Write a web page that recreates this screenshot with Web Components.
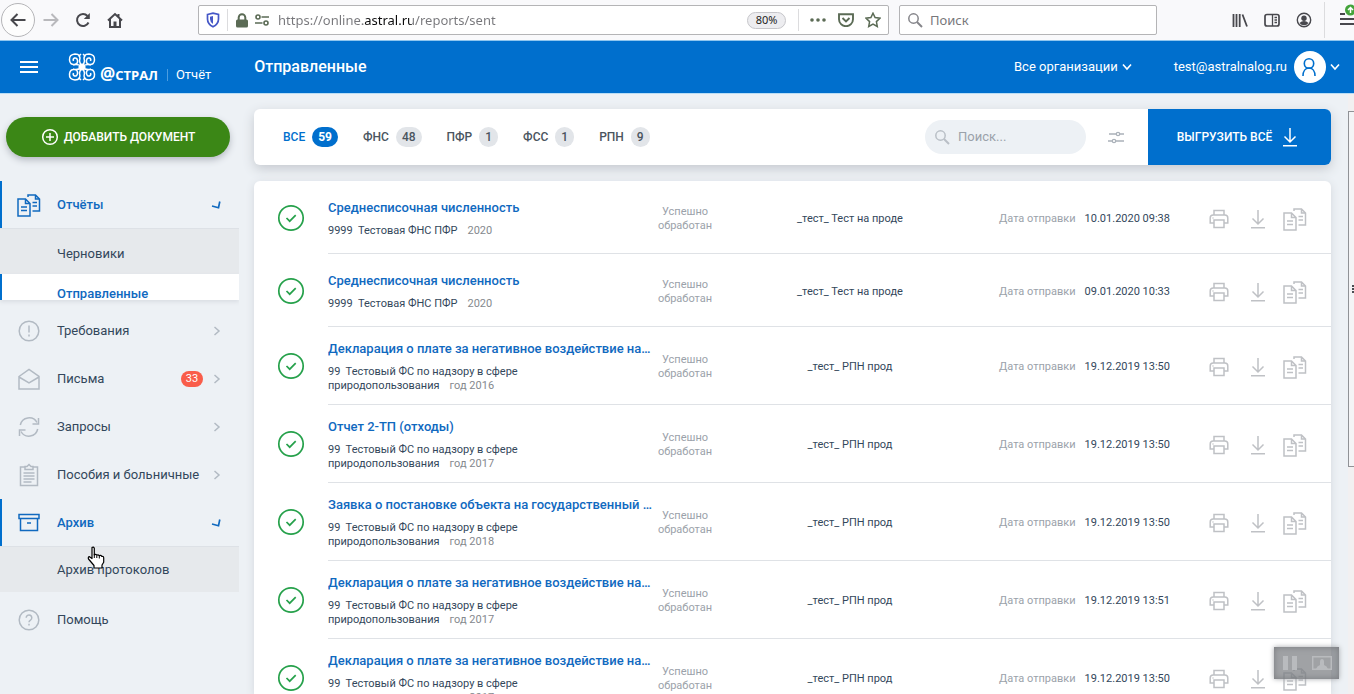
<!DOCTYPE html>
<html lang="ru">
<head>
<meta charset="utf-8">
<meta name="viewport" content="width=device-width, initial-scale=1">
<title>Отправленные</title>
<style>
  html, body { height: 100%; }
  body { margin: 0; overflow: hidden; background: #edf1f5; color: #33475b; font-family: Roboto, "Liberation Sans", sans-serif; font-size: 13px; line-height: 16px;
    --blue: #006fcd; --link: #1069bf; --muted: #9ba2aa; --icon: #b9bfc6; --ground: #edf1f5; --green: #26a14b; }
</style>
</head>
<body>
<astral-page></astral-page>

<script>
const svg = (w, h, body, extra = '') =>
  `<svg width="${w}" height="${h}" viewBox="0 0 ${w} ${h}" fill="none" stroke="currentColor" stroke-width="1.5" aria-hidden="true" ${extra}>${body}</svg>`;

const ICONS = {
  docs: svg(24, 24, '<path d="M1 6h7.500l4.500 4.500V23H1zM8.500 6v4.500H13M4 14h6M4 17.500h6"/><path d="M11 4V2h7.500l4 4v12H15.500M18.500 2v4h4M15.500 9.500h4.500M15.500 13h4.500"/>'),
  alert: svg(24, 24, '<circle cx="12" cy="12" r="9.800"/><path d="M12 6.500v7M12 15.500v2"/>'),
  mail: svg(24, 24, '<path d="M2 9.500L12 2.500l10 7V22H2zM2 10l10 6 10-6"/>'),
  sync: svg(24, 24, '<path d="M3.300 10A9 9 0 0 1 20 7.500M20.700 14A9 9 0 0 1 4 16.500"/><path d="M21.500 3v6h-6M2.500 21v-6h6"/>'),
  clip: svg(24, 24, '<path d="M8 4H3.500v18.500h17V4H16"/><path d="M8 6.500V3.500h2l2-2 2 2h2v3zM6.500 10h11M6.500 13h11M6.500 16h11M6.500 19h8"/>'),
  archive: svg(24, 24, '<path d="M2 3.500h20v4H2zM3.500 7.500v12h17v-12M10 12h4"/>'),
  help: svg(24, 24, '<circle cx="12" cy="12" r="9.800"/><path d="M9.200 9.800a2.800 2.800 0 1 1 4.300 2.300c-1.100.700-1.500 1.200-1.500 2.200M12 15.800v1.700"/>'),
  right: svg(8, 12, '<path d="M1.500 2l4.500 4-4.500 4"/>'),
  open: svg(10, 10, '<path d="M1 6l6.500 1.700L8.800 1.500" stroke-width="1.700"/>'),
  down: svg(10, 8, '<path d="M1 1.500l4 4.500 4-4.500" stroke-width="1.600"/>'),
  print: svg(20, 20, '<path d="M5 6V1.500h10V6M5 14H1.200V9q0-3 3-3h11.600q3 0 3 3v5H15M5 11h10v7.500H5zM3.500 9h1"/>'),
  load: svg(16, 20, '<path d="M8 1v14M2.500 9.500L8 15l5.500-5.500M1 18.700h14"/>'),
  filter: svg(16, 14, '<path d="M1 4h7M12 4h4M0 11h4M8 11h8" stroke-width="1.300"/><circle cx="10" cy="4" r="1.700" stroke-width="1.200"/><circle cx="6" cy="11" r="1.700" stroke-width="1.200"/>'),
  search: svg(16, 16, '<circle cx="6.500" cy="6.500" r="4.700"/><path d="M10 10l5 5" stroke-width="2"/>'),
  plus: svg(18, 18, '<circle cx="9" cy="9" r="7.300"/><path d="M9 5v8M5 9h8"/>'),
  check: svg(28, 28, '<circle cx="14" cy="14" r="12.200" stroke-width="1.700"/><path d="M9.500 14l3.200 3.200 6-6" stroke-width="1.700"/>'),
  user: svg(20, 22, '<circle cx="10" cy="7.500" r="4.700" stroke-width="1.600"/><path d="M4 20c0-5 2.500-8 6-8s6 3 6 8" stroke-width="1.600"/>'),
  burger: svg(18, 14, '<path d="M0 2h18M0 7h18M0 12h18" stroke-width="2"/>'),
  back: svg(16, 14, '<path d="M15.500 7H2M7.500 1L1.500 7l6 6" stroke-width="2"/>'),
  forward: svg(16, 14, '<path d="M.500 7H14M8.500 1l6 6-6 6" stroke-width="2"/>'),
  reload: svg(16, 16, '<path d="M13.500 10.500A6 6 0 1 1 12.500 4" stroke-width="2"/><path d="M14.800 1v6h-6z" fill="currentColor" stroke="none"/>'),
  home: svg(16, 16, '<path d="M1 8.500L8 2l7 6.500M3 7v8h10V7M11.500 5V2" stroke-width="2"/><path d="M6.500 9.500h3V15h-3z" fill="currentColor" stroke="none"/>'),
  shield: svg(14, 16, '<path d="M1.500 2.500L7 1.200l5.500 1.300v4.500q0 5-5.500 7.800Q1.500 12 1.500 7z" stroke-width="1.700"/><path d="M7 4v8Q4 10 4 7V4.700z" fill="currentColor" stroke="none"/>'),
  lock: svg(12, 15, '<rect y="6.500" width="12" height="8" rx="1.500" fill="currentColor" stroke="none"/><path d="M2.700 7V4.500a3.300 3.300 0 0 1 6.600 0V7" stroke-width="2"/>'),
  perms: svg(14, 12, '<path d="M6.500 3H14M0 9h7.500" stroke-width="1.700"/><circle cx="3" cy="3" r="2" stroke-width="1.600"/><circle cx="11" cy="9" r="2" stroke-width="1.600"/>'),
  dots: svg(18, 4, '<g fill="currentColor" stroke="none"><circle cx="3" cy="2" r="1.800"/><circle cx="9" cy="2" r="1.800"/><circle cx="15" cy="2" r="1.800"/></g>'),
  pocket: svg(16, 14, '<path d="M1 1.200h14v5a7 7 0 0 1-14 0zM4.500 5L8 8.500 11.500 5" stroke-width="1.900"/>'),
  star: svg(16, 16, '<path d="M8 1.200l2.100 4.400 4.800.600-3.500 3.400.900 4.900L8 12.200l-4.300 2.300.900-4.900L1.100 6.200l4.800-.600z" stroke-width="1.500"/>'),
  library: svg(16, 14, '<path d="M1.500 1v13M4.500 1v13M7.700 1v13M10.500 1.500l4.500 12" stroke-width="1.800"/>'),
  panel: svg(16, 14, '<rect x="1" y="1.500" width="14" height="11.500" rx="2" stroke-width="1.700"/><path d="M8.500 1v12M10.500 4.500H13M10.500 7H13M10.500 9.500H13" stroke-width="1.300"/>'),
  account: svg(16, 16, '<circle cx="8" cy="8" r="6.700" stroke-width="1.400"/><circle cx="8" cy="6.200" r="2.700" fill="currentColor" stroke="none"/><path d="M3.500 11q2-2 4.500-2t4.500 2q-1.500 2.300-4.500 2.300T3.500 11z" fill="currentColor" stroke="none"/>'),
  menu: svg(18, 24, '<path d="M3 10h5M3 15h14M3 20h14" stroke-width="1.900"/><circle cx="13.500" cy="6" r="5.500" fill="#43a33a" stroke="none"/><path d="M13.500 9V3.500M11 6l2.500-2.500L16 6" stroke="#fff"/>')
};

const define = (name, css, html) => {
  const template = document.createElement('template');
  template.innerHTML = `<style>
    *, *::before { box-sizing: border-box; }
    svg { display: block; flex: none; }
    button { font: inherit; color: inherit; background: none; border: 0; padding: 0; margin: 0; }
    a { color: inherit; text-decoration: none; }
    input { font: inherit; color: inherit; background: none; border: 0; padding: 0; min-width: 0; outline: 0; }
    ${css}</style>${typeof html === 'string' ? html : ''}`;
  customElements.define(name, class extends HTMLElement {
    constructor() {
      super();
      this.attachShadow({ mode: 'open' }).append(template.content.cloneNode(true));
    }
    connectedCallback() {
      if (typeof html === 'function' && !this.ready) {
        this.ready = true;
        this.shadowRoot.append(document.createRange().createContextualFragment(html(this.dataset)));
      }
    }
  });
};

define('browser-bar', `
  :host { display: flex; align-items: center; height: 41px; flex: none; background: #f9f9fb; border-bottom: 1px solid #8fc6ef; color: #48484d; font-family: "Noto Sans", sans-serif; }
  nav { display: flex; align-items: center; width: 198px; flex: none; padding-left: 1px; }
  nav button { width: 32px; height: 34px; display: grid; place-items: center; }
  .back { width: 34px; border: 1px solid #b5b5b8; border-radius: 50%; background: #fdfdfd; }
  .forward { color: #b9b9bc; }
  .field { display: flex; align-items: center; height: 30px; border: 1px solid #b4b4b6; border-radius: 2px; background: #fff; }
  .url { flex: 1; min-width: 0; padding: 0 7px; color: #5b6b55; }
  .shield { color: #4557c7; }
  .rule { width: 1px; height: 22px; background: #dcdcde; margin: 0 8px 0 7px; }
  .perms { margin: 0 9px 0 7px; }
  .url input { flex: 1; color: #77777b; -webkit-text-fill-color: transparent; -webkit-background-clip: text; background-clip: text;
    background-image: linear-gradient(90deg, #77777b 0 85px, #0c0c0d 85px 134px, #77777b 134px); }
  .zoom { height: 17px; width: 39px; border: 1px solid #c6c6ca; border-radius: 9px; background: #ededf0; color: #1c1c20; font-size: 11px; line-height: 14px; }
  .group { display: flex; align-items: center; gap: 11px; }
  .url .late { margin: 0 10px 0 12px; }
  .find { width: 258px; margin-left: 10px; padding-left: 7px; gap: 7px; color: #85858a; flex: none; }
  .find input { flex: 1; }
  .find input::placeholder { color: #77777b; opacity: 1; }
  .tools { display: flex; align-items: center; gap: 16px; width: 197px; flex: none; justify-content: flex-end; }
  .tools .end { border-left: 1px solid #dcdcde; height: 36px; padding: 0 0 8px 12px; margin: 0 -1px 0 -4px; }
`, `
  <nav aria-label="Браузер">
    <button class="back" aria-label="Назад">${ICONS.back}</button>
    <button class="forward" aria-label="Вперёд">${ICONS.forward}</button>
    <button aria-label="Обновить">${ICONS.reload}</button>
    <button aria-label="Домой">${ICONS.home}</button>
  </nav>
  <div class="field url">
    <span class="shield">${ICONS.shield}</span><span class="rule"></span>
    ${ICONS.lock}<span class="perms">${ICONS.perms}</span>
    <input aria-label="Адрес" value="https://online.astral.ru/reports/sent">
    <button class="zoom">80%</button><span class="rule late"></span>
    <div class="group"><button aria-label="Действия">${ICONS.dots}</button><button aria-label="Pocket">${ICONS.pocket}</button><button aria-label="Закладка">${ICONS.star}</button></div>
  </div>
  <div class="field find">${ICONS.search}<input type="text" placeholder="Поиск" aria-label="Поиск в сети"></div>
  <div class="tools">
    <button aria-label="Библиотека">${ICONS.library}</button>
    <button aria-label="Боковая панель">${ICONS.panel}</button>
    <button aria-label="Аккаунт">${ICONS.account}</button>
    <button class="end" aria-label="Меню">${ICONS.menu}</button>
  </div>
`);

define('astral-logo', `
  :host { display: block; }
  a { display: flex; align-items: flex-end; color: #fff; height: 28px; }
  .name { display: flex; align-items: flex-end; margin-left: 4px; font: bold 13px/12px "Open Sans", sans-serif; }
  .at { font-size: 17px; line-height: 14px; }
  .product { margin-left: 9px; padding-left: 8px; border-left: 1px solid #4c9de0; line-height: 12px; font-size: 13px; }
`, `
  <a href="#">${svg(28, 28, `
    <defs><g id="curl"><path d="M13 13L11.500 8Q13.500 1 7 1Q1 1.500 1.500 7Q2 12 6.500 11.500Q10 11 9.500 7.500Q9 4.500 6.500 5Q4.500 6 5.500 8M13 13Q9 10.500 5 12M13 1L10.500 3.500"/></g></defs>
    <use href="#curl"/><use href="#curl" transform="matrix(-1 0 0 1 28 0)"/><use href="#curl" transform="matrix(1 0 0 -1 0 28)"/><use href="#curl" transform="matrix(-1 0 0 -1 28 28)"/>
    <path d="M14 10l4 4-4 4-4-4z" fill="currentColor" stroke="none"/>`)}
    <span class="name"><span class="at">@</span>СТРАЛ</span><span class="product">Отчёт</span></a>
`);

define('app-header', `
  :host { display: flex; align-items: center; height: 52px; flex: none; background: var(--blue); color: #fff; padding: 0 14px 0 20px; }
  h1 { margin: 0 auto 0 43px; font-size: 16px; line-height: 20px; font-weight: 500; }
  astral-logo { margin: 0 0 0 30px; }
  button { display: flex; align-items: center; gap: 4px; }
  .user { margin-left: 42px; gap: 7px; }
  .face { width: 32px; height: 32px; border-radius: 50%; background: #fff; color: var(--blue); display: grid; place-items: center; }
  .user svg:last-child { margin-left: -3px; }
`, `
  <button aria-label="Меню">${ICONS.burger}</button>
  <astral-logo></astral-logo>
  <h1>Отправленные</h1>
  <button>Все организации ${ICONS.down}</button>
  <button class="user">test@astralnalog.ru <span class="face">${ICONS.user}</span>${ICONS.down}</button>
`);

define('nav-item', `
  :host { display: block; }
  a { display: flex; align-items: center; height: 48px; padding: 0 18px 0 17px; }
  .icon { width: 40px; color: #b2bac3; }
  .badge { margin-left: auto; width: 22px; height: 16px; border-radius: 8px; background: #f95d4a; color: #fff; font-size: 11px; text-align: center; }
  .mark { margin-left: auto; color: #b2bac3; width: 8px; }
  .badge + .mark { margin-left: 10px; }
  .on { color: var(--link); font-weight: 500; box-shadow: inset 2px 0 var(--blue); border-bottom: 1px solid #dde1e6; }
  .on .icon, .on .mark { color: var(--link); }
  .on .mark { width: 10px; }
`, d => `
  <a href="#" class="${d.open !== undefined ? 'on' : ''}"><span class="icon">${ICONS[d.icon]}</span><slot></slot>
  ${d.badge ? `<span class="badge">${d.badge}</span>` : ''}
  ${d.leaf !== undefined ? '' : `<span class="mark">${d.open !== undefined ? ICONS.open : ICONS.right}</span>`}</a>
`);

define('nav-sub', `
  :host { display: block; width: 239px; }
  a { display: block; padding: 17px 0 12px 57px; background: #e6e9ec; }
  :host([data-current]) { height: 26px; overflow: hidden; box-shadow: 0 2px 4px #d9dde3; margin-bottom: 7px; }
  :host([data-current]) a { padding-top: 12px; background: #fff; color: var(--link); font-weight: 500; box-shadow: inset 2px 0 var(--blue); }
  :host([data-last]) { margin-bottom: 4px; }
  :host([data-last]) a { padding: 15px 0 14px 57px; }
`, `<a href="#"><slot></slot></a>`);

define('side-menu', `
  :host { display: block; width: 239px; flex: none; padding-top: 23px; overflow: hidden; }
  button { display: flex; align-items: center; justify-content: center; gap: 5px; width: 224px; height: 40px; margin: 0 0 24px 6px; border-radius: 20px; background: #3b8716; color: #fff; font-size: 12px; font-weight: 500; box-shadow: 0 3px 7px #b5bac2; }
`, `
  <button>${ICONS.plus}ДОБАВИТЬ ДОКУМЕНТ</button>
  <nav aria-label="Разделы">
    <nav-item data-icon="docs" data-open>Отчёты</nav-item>
    <nav-sub>Черновики</nav-sub>
    <nav-sub data-current>Отправленные</nav-sub>
    <nav-item data-icon="alert">Требования</nav-item>
    <nav-item data-icon="mail" data-badge="33">Письма</nav-item>
    <nav-item data-icon="sync">Запросы</nav-item>
    <nav-item data-icon="clip">Пособия и больничные</nav-item>
    <nav-item data-icon="archive" data-open>Архив</nav-item>
    <nav-sub data-last>Архив протоколов</nav-sub>
    <nav-item data-icon="help" data-leaf>Помощь</nav-item>
  </nav>
`);

define('filter-tab', `
  :host { display: block; }
  button { display: flex; align-items: center; gap: 7px; font-size: 12px; font-weight: 500; line-height: 20px; color: #4a545e; }
  .count { min-width: 18px; padding: 0 6px; border-radius: 10px; background: #e2e5e9; text-align: center; }
  .on { color: var(--blue); }
  .on .count { background: var(--blue); color: #fff; font-weight: 700; }
`, d => `<button class="${d.on !== undefined ? 'on' : ''}"><slot></slot><span class="count">${d.count}</span></button>`);

define('filter-bar', `
  :host { display: flex; align-items: center; height: 56px; background: #fff; border-radius: 6px; overflow: hidden; box-shadow: 0 4px 12px #c6cad0; padding-left: 29px; flex: none; }
  .tabs { display: flex; gap: 25px; margin-right: auto; }
  label { display: flex; align-items: center; gap: 8px; width: 161px; height: 34px; padding: 0 9px; border-radius: 17px; background: var(--ground); color: var(--icon); }
  input { flex: 1; width: 0; }
  input::placeholder { color: var(--muted); opacity: 1; }
  .tune { color: #aab1b9; margin: 0 24px 0 22px; }
  .export { display: flex; align-items: center; justify-content: center; gap: 10px; width: 183px; height: 56px; padding-right: 4px; background: var(--blue); color: #fff; font-size: 12px; font-weight: 500; }
`, `
  <div class="tabs">
    <filter-tab data-on data-count="59">ВСЕ</filter-tab>
    <filter-tab data-count="48">ФНС</filter-tab>
    <filter-tab data-count="1">ПФР</filter-tab>
    <filter-tab data-count="1">ФСС</filter-tab>
    <filter-tab data-count="9">РПН</filter-tab>
  </div>
  <label>${ICONS.search}<input type="text" placeholder="Поиск..." aria-label="Поиск"></label>
  <button class="tune" aria-label="Фильтр">${ICONS.filter}</button>
  <button class="export">ВЫГРУЗИТЬ ВСЁ ${ICONS.load}</button>
`);

define('report-row', `
  :host { display: flex; font-size: 11px; line-height: 14px; }
  .state { width: 74px; flex: none; display: flex; align-items: center; padding-left: 23px; color: var(--green); }
  .line { flex: 1; min-width: 0; display: flex; align-items: center; min-height: 73px; padding: 14px 24px 11px 0; border-bottom: 1px solid #dfe2e6; }
  .main { width: 324px; flex: none; }
  .title { display: block; font-size: 13px; line-height: 16px; font-weight: 500; color: var(--link); white-space: nowrap; overflow: hidden; text-overflow: ellipsis; margin-bottom: 8px; }
  .period { margin-left: 10px; color: #85898e; }
  .status { width: 66px; flex: none; text-align: center; color: var(--muted); }
  .org { flex: 1; text-align: center; }
  .date { flex: none; display: flex; gap: 9px; margin: 0 39px 0 17px; color: var(--muted); }
  .date time { color: #33475b; }
  .acts { display: flex; gap: 17px; align-items: center; color: #bfc1c5; }
  .print { margin-right: 4px; }
`, d => `
  <div class="state" role="img" aria-label="Обработан">${ICONS.check}</div>
  <div class="line">
    <div class="main"><a class="title" href="#"><slot></slot></a>
      ${d.office.split('|').map((part, i, all) => `<div>${i ? '' : d.code + '&nbsp; '}${part}${i === all.length - 1 ? `<span class="period">${d.period}</span>` : ''}</div>`).join('')}</div>
    <div class="status">Успешно обработан</div>
    <div class="org">${d.org}</div>
    <div class="date">Дата отправки<time>${d.date}</time></div>
    <div class="acts"><button class="print" aria-label="Печать">${ICONS.print}</button><button aria-label="Скачать">${ICONS.load}</button><button aria-label="Копировать">${ICONS.docs}</button></div>
  </div>
`);

const rpn = 'data-code="99" data-office="Тестовый ФС по надзору в сфере|природопользования" data-org="_тест_ РПН прод"';
const fns = 'data-code="9999" data-office="Тестовая ФНС ПФР" data-period="2020" data-org="_тест_ Тест на проде"';
define('report-list', `
  :host { display: block; background: #fff; border-radius: 6px 6px 0 0; box-shadow: 0 2px 8px #d3d7dd; flex: 1; min-height: 0; overflow: hidden; }
`, `
  <report-row ${fns} data-date="10.01.2020 09:38">Среднесписочная численность</report-row>
  <report-row ${fns} data-date="09.01.2020 10:33">Среднесписочная численность</report-row>
  <report-row ${rpn} data-period="год 2016" data-date="19.12.2019 13:50">Декларация о плате за негативное воздействие на…</report-row>
  <report-row ${rpn} data-period="год 2017" data-date="19.12.2019 13:50">Отчет 2-ТП (отходы)</report-row>
  <report-row ${rpn} data-period="год 2018" data-date="19.12.2019 13:50">Заявка о постановке объекта на государственный …</report-row>
  <report-row ${rpn} data-period="год 2017" data-date="19.12.2019 13:51">Декларация о плате за негативное воздействие на…</report-row>
  <report-row ${rpn} data-period="год 2017" data-date="19.12.2019 13:50">Декларация о плате за негативное воздействие на…</report-row>
`);

define('scroll-track', `
  :host { display: block; width: 6px; flex: none; background: #f2f0f1; padding-top: 17px; }
  .thumb { height: 61%; border: 1px solid #909296; border-right: 0; background: #f4f4f6; display: flex; align-items: center; justify-content: flex-end; }
  .grip { width: 2px; height: 8px; background: repeating-linear-gradient(#4a4d52 0 2px, #f4f4f6 2px 3px); }
`, `<div class="thumb"><div class="grip"></div></div>`);

define('recorder-badge', `
  :host { display: flex; align-items: center; justify-content: space-between; width: 65px; height: 32px; padding: 0 7px 0 9px; background: #7c7e82b8; box-shadow: inset 0 0 6px #77797d, 0 0 5px #a5a7ab; color: #b9bbbe; }
`, `
  ${svg(14, 14, '<path d="M0 0h5v14H0zM9 0h5v14H9z" fill="currentColor" stroke="none"/>')}
  ${svg(20, 14, '<path d="M.700.700h18.600v12.600H.700z"/><path d="M4 13q1-3 4-4V6q0-3 2-3t2 3v3q3 1 4 4z" fill="currentColor" stroke="none"/>')}
`);

define('hand-pointer', `:host { display: block; }`, `
  ${svg(18, 23, '<path d="M5 1.500q1.500-1 2.300.700V9q1-1.300 2.500.200 1.300-1 2.500.500 1.700-.900 2.500.700 1.700-.300 1.900 1.300v4.500L15 19v3H7v-2.500L1.500 13q-.800-2 1-2.300L5 12.500z" fill="#fff" stroke="#000" stroke-width="1.200" stroke-linejoin="round"/><path d="M7.300 8v4M9.800 9.500V12M12.300 10v2.500" stroke="#000" stroke-width="1"/>')}
`);

define('astral-page', `
  :host { display: flex; flex-direction: column; height: 100vh; position: relative; overflow: hidden; }
  .body { flex: 1; min-height: 0; display: flex; background: var(--ground); border-top: 1px solid #b9ddf5; }
  main { flex: 1; min-width: 0; display: flex; flex-direction: column; gap: 16px; padding: 15px 17px 0 15px; }
  hand-pointer { position: absolute; left: 87px; top: 546px; }
  recorder-badge { position: absolute; right: 15px; bottom: 15px; }
`, `
  <browser-bar></browser-bar>
  <app-header></app-header>
  <div class="body">
    <side-menu></side-menu>
    <main><filter-bar></filter-bar><report-list></report-list></main>
    <scroll-track></scroll-track>
  </div>
  <hand-pointer></hand-pointer>
  <recorder-badge></recorder-badge>
`);
</script>
</body>
</html>
